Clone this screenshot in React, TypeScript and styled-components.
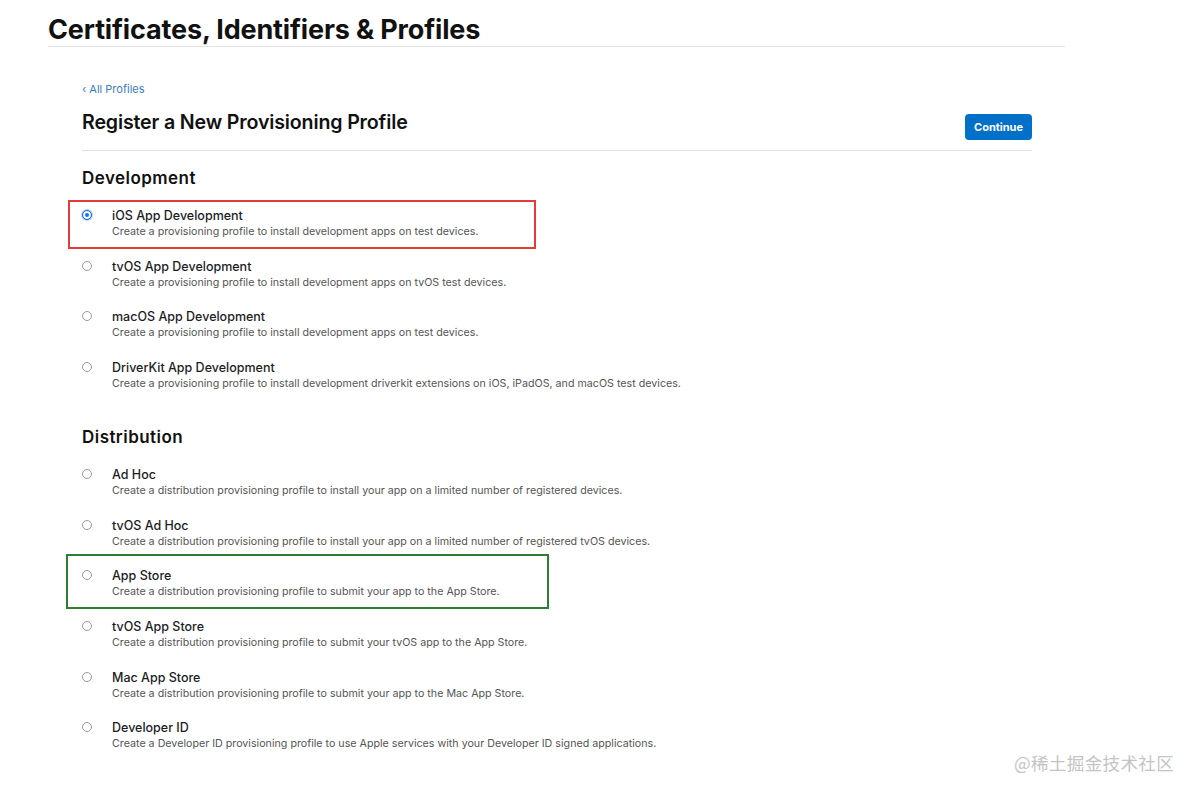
import React from 'react';
import styled, { createGlobalStyle } from 'styled-components';

const GlobalStyle = createGlobalStyle`
  html, body {
    margin: 0;
    padding: 0;
    background: #ffffff;
    font-family: Inter, 'Noto Sans', 'Liberation Sans', sans-serif;
    color: #1d1d1f;
  }
`;

interface ProfileOption {
  title: string;
  description: string;
  selected?: boolean;
  frame?: 'red' | 'green';
}

const development: ProfileOption[] = [
  {
    title: 'iOS App Development',
    description: 'Create a provisioning profile to install development apps on test devices.',
    selected: true,
    frame: 'red',
  },
  {
    title: 'tvOS App Development',
    description: 'Create a provisioning profile to install development apps on tvOS test devices.',
  },
  {
    title: 'macOS App Development',
    description: 'Create a provisioning profile to install development apps on test devices.',
  },
  {
    title: 'DriverKit App Development',
    description:
      'Create a provisioning profile to install development driverkit extensions on iOS, iPadOS, and macOS test devices.',
  },
];

const distribution: ProfileOption[] = [
  {
    title: 'Ad Hoc',
    description:
      'Create a distribution provisioning profile to install your app on a limited number of registered devices.',
  },
  {
    title: 'tvOS Ad Hoc',
    description:
      'Create a distribution provisioning profile to install your app on a limited number of registered tvOS devices.',
  },
  {
    title: 'App Store',
    description: 'Create a distribution provisioning profile to submit your app to the App Store.',
    frame: 'green',
  },
  {
    title: 'tvOS App Store',
    description: 'Create a distribution provisioning profile to submit your tvOS app to the App Store.',
  },
  {
    title: 'Mac App Store',
    description: 'Create a distribution provisioning profile to submit your app to the Mac App Store.',
  },
  {
    title: 'Developer ID',
    description:
      'Create a Developer ID provisioning profile to use Apple services with your Developer ID signed applications.',
  },
];

const Page = styled.div`
  position: relative;
  width: 1197px;
  height: 796px;
  overflow: hidden;
`;

const Header = styled.header`
  margin-left: 48px;
  width: 1017px;
  height: 47px;
  border-bottom: 1px solid #e3e3e3;
  box-sizing: border-box;

  h1 {
    margin: 0;
    padding-top: 13px;
    font-size: 27px;
    line-height: 34px;
    font-weight: 700;
    letter-spacing: -0.15px;
    color: #111;
  }
`;

const Content = styled.main`
  margin-left: 82px;
  width: 950px;
`;

const BackLink = styled.a`
  display: block;
  margin-top: 35px;
  font-size: 11px;
  line-height: 14px;
  color: #3a7cc4;
  text-decoration: none;
`;

const TitleBar = styled.div`
  display: flex;
  justify-content: space-between;
  align-items: flex-start;
  margin-top: 12px;
  height: 42px;
  border-bottom: 1px solid #e0e0e0;

  h2 {
    margin: 0;
    padding-top: 1px;
    font-size: 19.6px;
    line-height: 26px;
    font-weight: 600;
    letter-spacing: -0.15px;
    color: #111;
  }
`;

const ContinueButton = styled.button`
  margin-top: 6px;
  height: 26px;
  padding: 0 9px;
  border: none;
  border-radius: 4px;
  background: #0070c9;
  color: #fff;
  font-family: inherit;
  font-size: 11px;
  font-weight: 700;
  cursor: pointer;
`;

const SectionTitle = styled.h3<{ $top: number }>`
  margin: ${(p) => p.$top}px 0 0;
  font-size: 17px;
  line-height: 22px;
  font-weight: 600;
  letter-spacing: 0.45px;
  color: #111;
`;

const OptionList = styled.div<{ $top: number }>`
  display: flex;
  flex-direction: column;
  gap: 19.67px;
  margin-top: ${(p) => p.$top}px;
`;

const frameColors = { red: '#e53a3a', green: '#2f7d32' };
const frameBoxes = {
  red: { top: -8, left: -14, width: 468, height: 49 },
  green: { top: -14, left: -16, width: 483, height: 55 },
};

const OptionRow = styled.label<{ $frame?: 'red' | 'green' }>`
  position: relative;
  display: flex;
  align-items: flex-start;
  gap: 20px;
  height: 31px;

  &::before {
    content: '';
    display: ${(p) => (p.$frame ? 'block' : 'none')};
    position: absolute;
    top: ${(p) => (p.$frame ? frameBoxes[p.$frame].top : 0)}px;
    left: ${(p) => (p.$frame ? frameBoxes[p.$frame].left : 0)}px;
    width: ${(p) => (p.$frame ? frameBoxes[p.$frame].width : 0)}px;
    height: ${(p) => (p.$frame ? frameBoxes[p.$frame].height : 0)}px;
    border: 2px solid ${(p) => (p.$frame ? frameColors[p.$frame] : 'transparent')};
    box-sizing: border-box;
    pointer-events: none;
  }
`;

const Radio = styled.span<{ $checked?: boolean }>`
  flex: 0 0 auto;
  width: 10px;
  height: 10px;
  margin-top: 2px;
  border-radius: 50%;
  box-sizing: border-box;
  border: ${(p) => (p.$checked ? '1px solid #1a73e8' : '1px solid #9a9a9a')};
  background: ${(p) => (p.$checked ? '#1a73e8' : '#fff')};
  box-shadow: ${(p) => (p.$checked ? 'inset 0 0 0 2px #fff, 0 0 0 1px #b8d4f8' : 'none')};
`;

const OptionText = styled.div`
  display: flex;
  flex-direction: column;
`;

const OptionTitle = styled.span`
  font-size: 12.5px;
  line-height: 16px;
  font-weight: 500;
  color: #1d1d1f;
`;

const OptionDescription = styled.span`
  font-size: 10.7px;
  line-height: 15px;
  color: #555;
`;

const Watermark = styled.div`
  position: absolute;
  left: 1014px;
  top: 751px;
  font-family: 'Noto Sans CJK SC', 'Noto Sans', sans-serif;
  font-size: 17.6px;
  line-height: 24px;
  color: #c4c4c4;
  letter-spacing: 0.3px;
`;

const Option = ({ title, description, selected, frame }: ProfileOption) => (
  <OptionRow $frame={frame}>
    <Radio $checked={selected} />
    <OptionText>
      <OptionTitle>{title}</OptionTitle>
      <OptionDescription>{description}</OptionDescription>
    </OptionText>
  </OptionRow>
);

export default function App() {
  return (
    <Page>
      <GlobalStyle />
      <Header>
        <h1>Certificates, Identifiers &amp; Profiles</h1>
      </Header>
      <Content>
        <BackLink href="#">‹ All Profiles</BackLink>
        <TitleBar>
          <h2>Register a New Provisioning Profile</h2>
          <ContinueButton>Continue</ContinueButton>
        </TitleBar>
        <SectionTitle $top={16}>Development</SectionTitle>
        <OptionList $top={19}>
          {development.map((o) => (
            <Option key={o.title} {...o} />
          ))}
        </OptionList>
        <SectionTitle $top={35}>Distribution</SectionTitle>
        <OptionList $top={19}>
          {distribution.map((o) => (
            <Option key={o.title} {...o} />
          ))}
        </OptionList>
      </Content>
      <Watermark>@稀土掘金技术社区</Watermark>
    </Page>
  );
}
